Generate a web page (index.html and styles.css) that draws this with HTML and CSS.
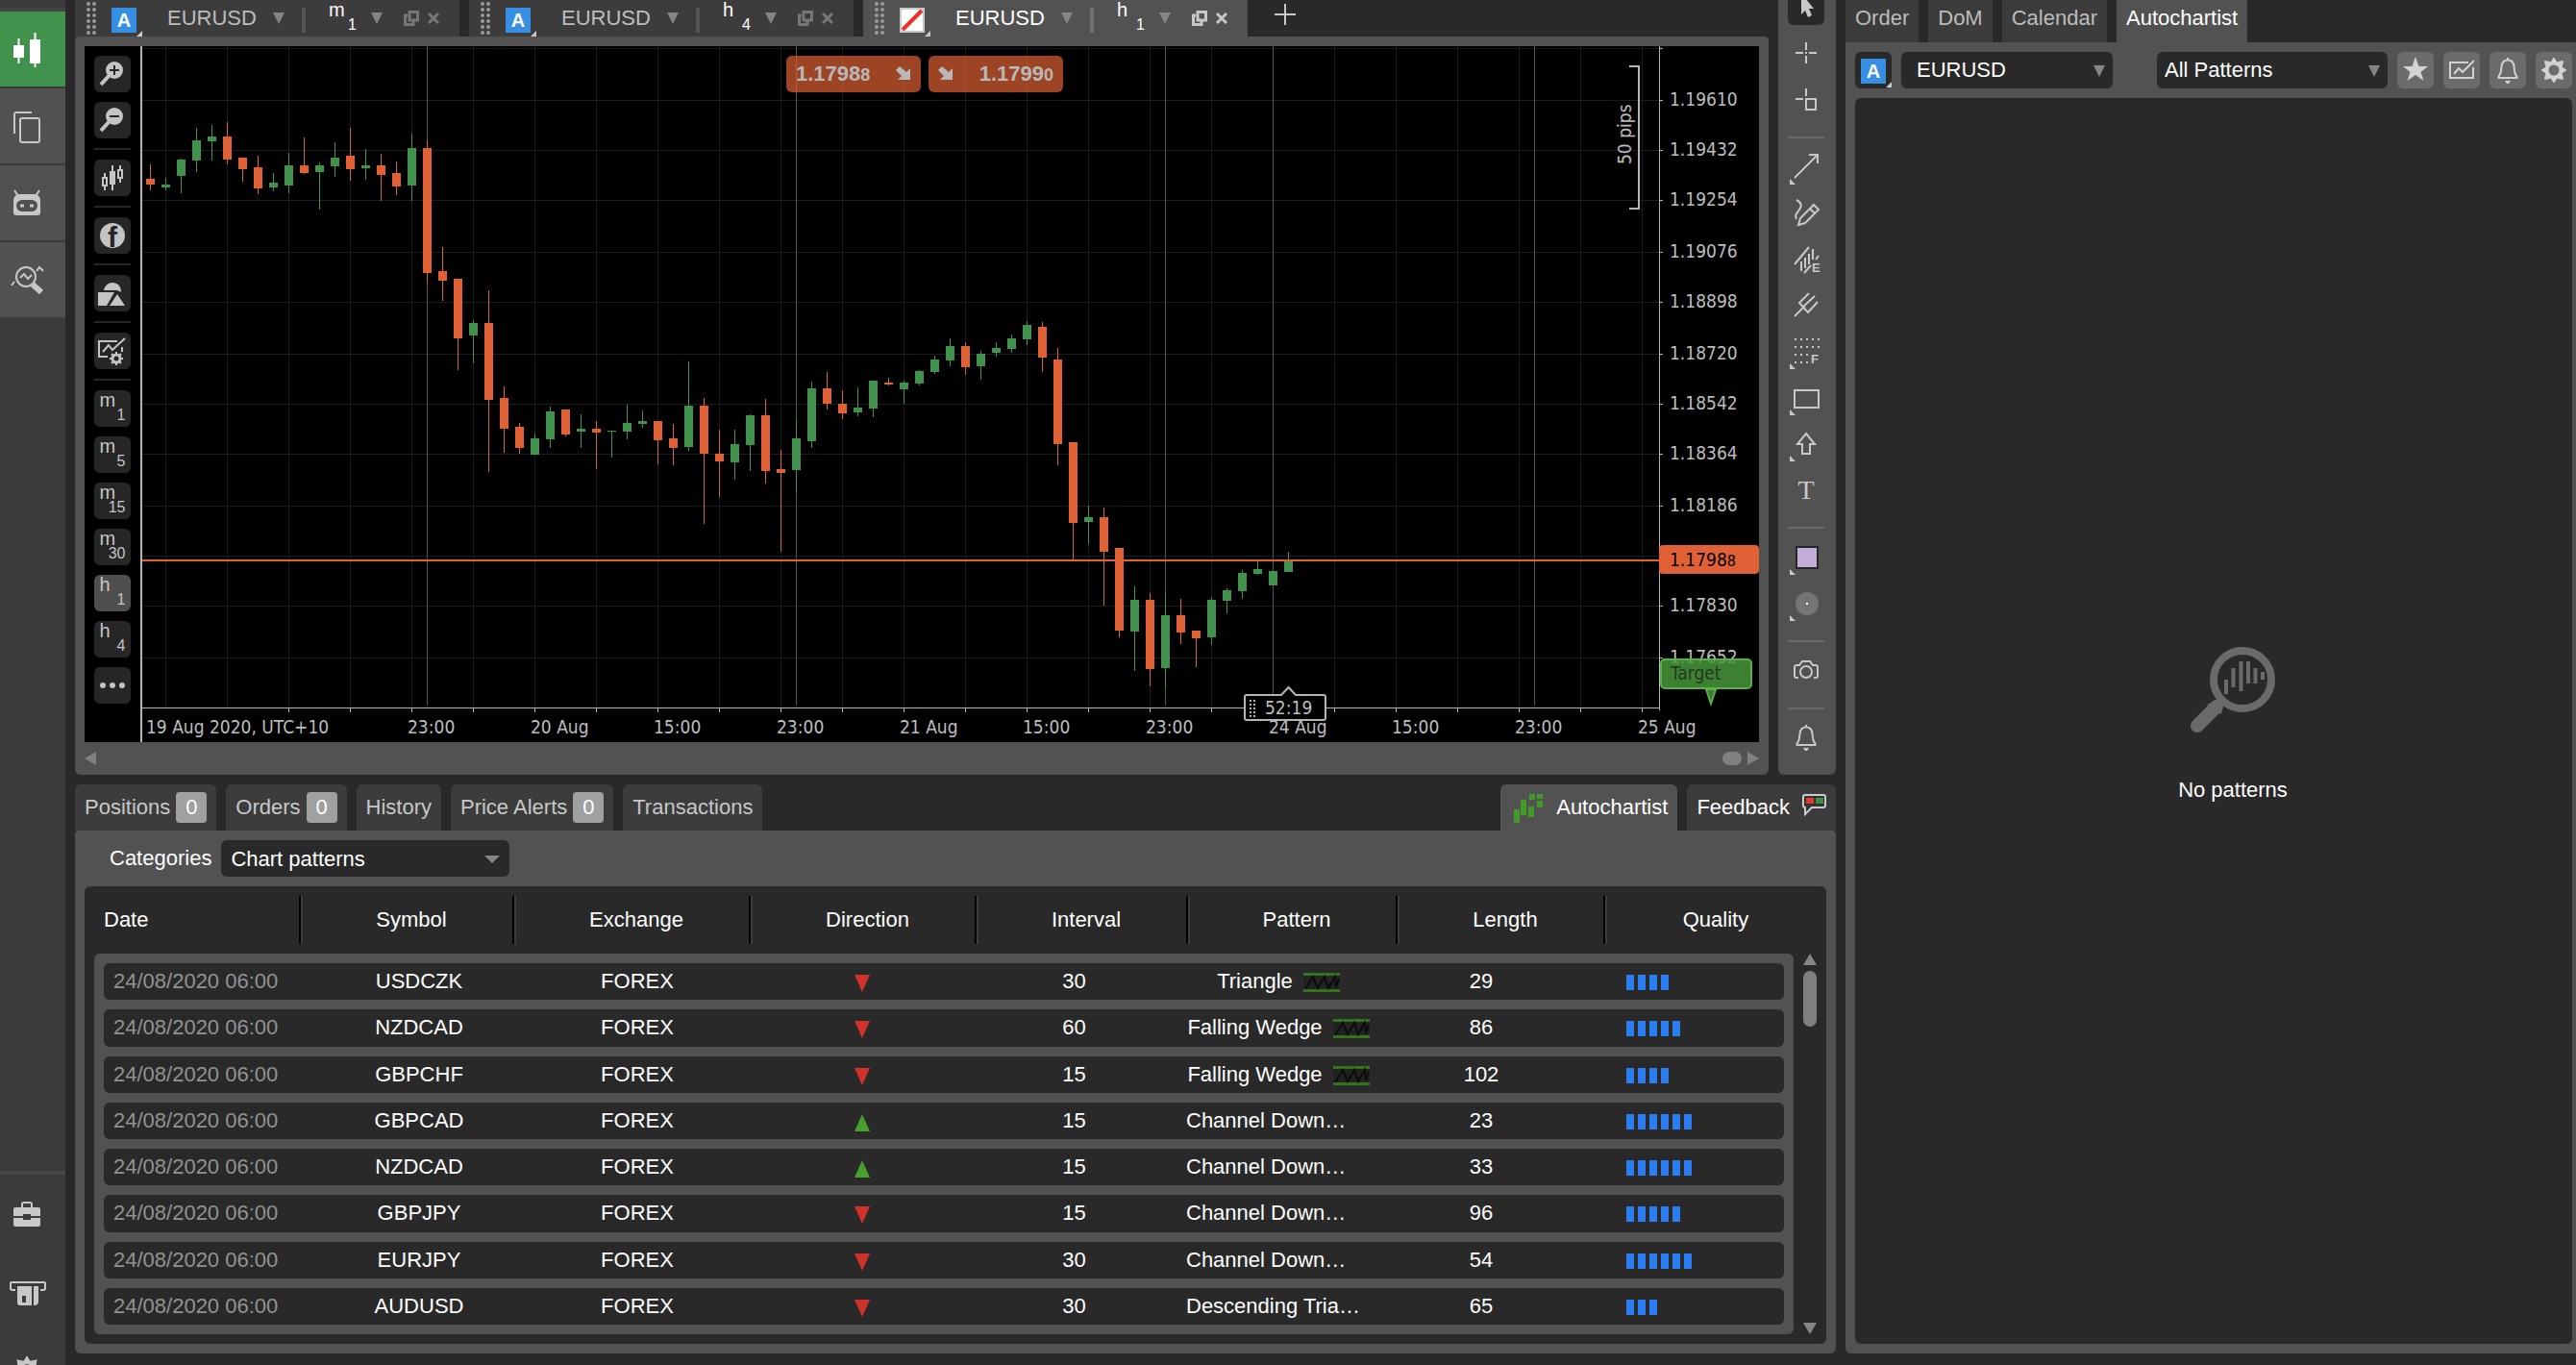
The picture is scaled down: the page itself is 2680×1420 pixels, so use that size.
FILE: index.html
```html
<!DOCTYPE html>
<html lang="en">
<head>
<meta charset="utf-8">
<title>EURUSD h1</title>
<link rel="stylesheet" href="styles.css">
<script src="chart.js" defer></script>
</head>
<body>
<svg class="defs" aria-hidden="true">
  <symbol id="i-dots" viewBox="0 0 10 38"><path d="M2 4v34M8 4v34" stroke="currentColor" stroke-width="4" stroke-linecap="round" stroke-dasharray="0 6"/></symbol>
  <symbol id="i-restore" viewBox="0 0 16 16"><path d="M6 1.500h8.500v8.500h-8.500zM4 5h-2.500v9.500h8.500v-3" fill="none" stroke="currentColor" stroke-width="3"/></symbol>
  <symbol id="i-close" viewBox="0 0 12 12"><path d="M1 1l10 10M11 1L1 11" stroke="currentColor" stroke-width="3"/></symbol>
  <symbol id="i-bell" viewBox="0 0 38 38"><path d="M8.500 27h21M9 26c4-4 3-9 3.500-11c.6-4.500 3-6.500 6.500-6.500s6 2 6.500 6.500c.5 2-.5 7 3.500 11M19 6v3" fill="none" stroke="currentColor" stroke-width="2"/><path d="M16 30h6l-2 3h-2z" fill="currentColor"/></symbol>
  <symbol id="i-gear" viewBox="0 0 38 38"><circle cx="19" cy="19" r="7.500" fill="none" stroke="currentColor" stroke-width="4"/><path d="M16 11l3-5 3 5zM16 27l3 5 3-5zM11 16l-5 3 5 3zM27 16l5 3-5 3zM10.500 14.500l-1-5 5 1zM27.500 14.500l1-5-5 1zM10.500 23.500l-1 5 5-1zM27.500 23.500l1 5-5-1z" fill="currentColor" stroke="currentColor"/></symbol>
  <symbol id="i-sell" viewBox="0 0 16 16"><path d="M4 0L0 4l6 6-4 4h13V2l-4 4z" fill="currentColor"/></symbol>
  <symbol id="i-pattern" viewBox="0 0 38 20"><path d="M0 3h38v14H0z" fill="#222"/><path d="M0 1.500h38M0 18.500h38" stroke="#33751f" stroke-width="3"/><path d="M2 17L10 4l5 12 7-12 4 12 7-12 1 11 3-9" fill="none" stroke="#0c0c0c" stroke-width="2"/></symbol>
  <symbol id="i-down" viewBox="0 0 16 18"><path d="M0 0h16L8 18z" fill="#d0312d"/></symbol>
  <symbol id="i-up" viewBox="0 0 16 18"><path d="M0 18h16L8 0z" fill="#48a02c"/></symbol>
</svg>

<nav class="rail" aria-label="Sections">
  <button class="rail-item active" aria-label="Trade"><svg viewBox="0 0 40 40"><path d="M6 16h11v13H6zM23 10h11v25H23z" fill="currentColor"/><path d="M11.500 9v26M28.500 3v36" stroke="currentColor" stroke-width="2"/></svg></button>
  <button class="rail-item" aria-label="Copy"><svg viewBox="0 0 40 40"><path d="M25 6H9q-2 0-2 2v20" class="line"/><rect x="13" y="12" width="20" height="25" rx="2" class="line"/></svg></button>
  <button class="rail-item" aria-label="Automate"><svg viewBox="0 0 40 40"><path d="M7 7l4 6M33 7l-4 6" class="line"/><path d="M12 11h16q6 0 6 8v11q0 3-3 3H9q-3 0-3-3V19q0-8 6-8z" fill="currentColor"/><rect x="9" y="17" width="22" height="12" rx="6" fill="#505050"/><path d="M13 23h4M23 23h4" stroke="currentColor" stroke-width="3"/></svg></button>
  <button class="rail-item" aria-label="Analyze"><svg viewBox="0 0 40 40"><circle cx="19" cy="17" r="10" class="line"/><path d="M13 18l4-4 4 5 4-4M30 11l3-4 4 4M4 26l3-4" class="line"/><path d="M26 25l9 8" stroke="currentColor" stroke-width="6"/></svg></button>
  <div class="rail-foot">
    <button class="rail-link" aria-label="Accounts"><svg viewBox="0 0 40 40"><path d="M15 14v-4q0-2 2-2h6q2 0 2 2v4" class="line"/><path d="M8 13h24q2 0 2 2v7H24v-2h-8v2H6v-7q0-2 2-2zM6 24h10v2h8v-2h10v7q0 2-2 2H8q-2 0-2-2z" fill="currentColor"/></svg></button>
    <button class="rail-link" aria-label="Deposit"><svg viewBox="0 0 40 40"><path d="M8 18H5q-2 0-2-2v-5q0-1 1-1h34q1 0 1 1v5q0 2-2 2h-3" class="line"/><path d="M10 14h15v20H13q-3 0-3-3zM27 14h5v16q0 4-5 4z" fill="currentColor"/><path d="M15 24h4v7h-4z" fill="#3c3c3c"/></svg></button>
    <button class="rail-link" aria-label="Settings"><svg viewBox="0 0 38 38"><use href="#i-gear"/></svg></button>
  </div>
</nav>

<main class="work">
  <div class="upper">
    <section class="charts">
      <div class="chart-tabs">
        <div class="chart-tab">
          <svg class="grip"><use href="#i-dots"/></svg>
          <button class="link-badge">A</button>
          <button class="drop">EURUSD<i class="caret"></i></button>
          <i class="bar"></i>
          <button class="drop"><span class="tf"><span>m</span><span>1</span></span><i class="caret"></i></button>
          <button class="tool" aria-label="Detach"><svg class="s16"><use href="#i-restore"/></svg></button>
          <button class="tool" aria-label="Close"><svg class="s12"><use href="#i-close"/></svg></button>
        </div>
        <div class="chart-tab">
          <svg class="grip"><use href="#i-dots"/></svg>
          <button class="link-badge">A</button>
          <button class="drop">EURUSD<i class="caret"></i></button>
          <i class="bar"></i>
          <button class="drop"><span class="tf"><span>h</span><span>4</span></span><i class="caret"></i></button>
          <button class="tool" aria-label="Detach"><svg class="s16"><use href="#i-restore"/></svg></button>
          <button class="tool" aria-label="Close"><svg class="s12"><use href="#i-close"/></svg></button>
        </div>
        <div class="chart-tab active">
          <svg class="grip"><use href="#i-dots"/></svg>
          <button class="link-badge none" aria-label="Not linked"><svg viewBox="0 0 26 26"><path d="M3 23L23 3" stroke="#ee2f24" stroke-width="4"/></svg></button>
          <button class="drop">EURUSD<i class="caret"></i></button>
          <i class="bar"></i>
          <button class="drop"><span class="tf"><span>h</span><span>1</span></span><i class="caret"></i></button>
          <button class="tool" aria-label="Detach"><svg class="s16"><use href="#i-restore"/></svg></button>
          <button class="tool" aria-label="Close"><svg class="s12"><use href="#i-close"/></svg></button>
        </div>
        <button class="add-tab" aria-label="New chart"><svg viewBox="0 0 22 22"><path d="M0 11h22M11 0v22" class="line"/></svg></button>
      </div>
      <div class="chart-frame">
        <div class="chart">
          <div class="chart-tools">
            <button aria-label="Zoom in"><svg viewBox="0 0 38 38"><path d="M7 30l9-10" stroke="currentColor" stroke-width="4"/><circle cx="21" cy="15" r="9" fill="currentColor"/><path d="M16 15h10M21 10v10" stroke="#262626" stroke-width="2"/></svg></button>
            <button aria-label="Zoom out"><svg viewBox="0 0 38 38"><path d="M7 30l9-10" stroke="currentColor" stroke-width="4"/><circle cx="21" cy="15" r="9" fill="currentColor"/><path d="M16 15h10" stroke="#262626" stroke-width="2"/></svg></button>
            <hr>
            <button aria-label="Chart type"><svg viewBox="0 0 38 38"><path d="M9 19h4v8H9zM11 14v5M11 27v5M25 11h4v8h-4zM27 6v5M27 19v5M19 6v26" class="line"/><path d="M16 12h6v14h-6z" fill="currentColor"/></svg></button>
            <hr>
            <button aria-label="Indicators"><svg viewBox="0 0 38 38"><circle cx="19" cy="19" r="13" fill="currentColor"/><text x="14" y="31" class="f-mark">f</text></svg></button>
            <hr>
            <button aria-label="Objects"><svg viewBox="0 0 38 38"><path d="M10 16a9 9 0 1 1 18 2l-4-2z" fill="currentColor"/><path d="M4 18h17l-8 14H4zM24 20l8 12H16z" fill="currentColor"/></svg></button>
            <hr>
            <button aria-label="Chart settings"><svg viewBox="0 0 38 38"><path d="M24 9H5v16h9M9 20l6-7 4 5L32 6M29 15v5" class="line"/><circle cx="23" cy="27" r="4" fill="none" stroke="currentColor" stroke-width="3"/><path d="M23 20v3M23 31v3M16 27h3M27 27h3M18 22l2 2M28 22l-2 2M18 32l2-2M28 32l-2-2" class="line"/></svg></button>
            <hr>
            <button><span class="tf"><span>m</span><span>1</span></span></button>
            <button><span class="tf"><span>m</span><span>5</span></span></button>
            <button><span class="tf"><span>m</span><span>15</span></span></button>
            <button><span class="tf"><span>m</span><span>30</span></span></button>
            <button class="active"><span class="tf"><span>h</span><span>1</span></span></button>
            <button><span class="tf"><span>h</span><span>4</span></span></button>
            <button aria-label="More"><svg viewBox="0 0 38 38" fill="currentColor"><circle cx="9" cy="19" r="3"/><circle cx="19" cy="19" r="3"/><circle cx="29" cy="19" r="3"/></svg></button>
          </div>
          <svg id="plot" class="plot" viewBox="146 48 1684 724" role="img" aria-label="EURUSD hourly candles"></svg>
          <div class="quick">
            <button><span>1.1798<small>8</small></span><svg class="s16"><use href="#i-sell"/></svg></button>
            <button><svg class="s16"><use href="#i-sell"/></svg><span>1.1799<small>0</small></span></button>
          </div>
        </div>
        <div class="hscroll"><i class="arrow-left"></i><i class="hthumb"></i><i class="arrow-right"></i></div>
      </div>
    </section>

    <aside class="drawbar" aria-label="Drawing tools">
      <button class="active" aria-label="Pointer"><svg viewBox="0 0 38 38"><path d="M14 5v22l4-4 3 7 4-2-3-7h5z" fill="currentColor"/></svg></button>
      <button aria-label="Crosshair"><svg viewBox="0 0 38 38"><path d="M8 19h8M22 19h8M19 8v8M19 22v8M18 19h2" class="line"/></svg></button>
      <button aria-label="Marker"><svg viewBox="0 0 38 38"><path d="M8 19h8M19 8v8M19 19h10v11H19z" class="line"/></svg></button>
      <hr>
      <button class="more" aria-label="Line"><svg viewBox="0 0 38 38"><path d="M7 31L31 7M22 7h9v9" class="line"/></svg></button>
      <button aria-label="Pencil"><svg viewBox="0 0 38 38"><path d="M9 6c8 4 4 9 1 13q-3 3-1 7M11 32l2-7L27 11l5 5-14 14zM23 15l5 5" class="line"/></svg></button>
      <button aria-label="Channel"><svg viewBox="0 0 38 38"><path d="M7 25L22 7M14 22v10M18 18v11M22 14v11M26 9v11M17 34l7-8M29 20l3-4" class="line"/><text x="25" y="33" class="mark">E</text></svg></button>
      <button aria-label="Pitchfork"><svg viewBox="0 0 38 38"><path d="M7 31l11-11M22 7L12 17l9 10 10-11M16 21L28 10" class="line"/></svg></button>
      <button class="more" aria-label="Fibonacci"><svg viewBox="0 0 38 38"><path d="M7 7h26M7 15h26M7 23h14M7 31h14" stroke="currentColor" stroke-width="2" stroke-dasharray="2 4"/><text x="24" y="32" class="mark">F</text></svg></button>
      <button class="more" aria-label="Rectangle"><svg viewBox="0 0 38 38"><path d="M7 12h25v18H7z" class="line"/></svg></button>
      <button class="more" aria-label="Arrow"><svg viewBox="0 0 38 38"><path d="M19 9l9 11h-5v10h-8v-10h-5z" class="line"/></svg></button>
      <button aria-label="Text"><svg viewBox="0 0 38 38"><text x="19" y="29" class="t-mark">T</text></svg></button>
      <hr>
      <button class="more" aria-label="Colour"><svg viewBox="0 0 38 38"><path d="M9 9h22v22H9z" fill="#c3aed9" stroke="#262626" stroke-width="2"/></svg></button>
      <button class="more" aria-label="Thickness"><svg viewBox="0 0 38 38"><circle cx="20" cy="20" r="12" fill="#757575"/><path d="M19 20h2" stroke="#fff" stroke-width="2"/></svg></button>
      <hr>
      <button aria-label="Snapshot"><svg viewBox="0 0 38 38"><circle cx="19" cy="21" r="6" class="line"/><path d="M11 27H9q-2 0-2-2V16q0-2 2-2h3l3-4h8l3 4h3q2 0 2 2v9q0 2-2 2h-2" class="line"/></svg></button>
      <hr>
      <button aria-label="Alerts"><svg viewBox="0 0 38 38"><use href="#i-bell"/></svg></button>
    </aside>
  </div>

  <section class="lower">
    <div class="tabs">
      <button class="tab">Positions<b class="count">0</b></button>
      <button class="tab">Orders<b class="count">0</b></button>
      <button class="tab">History</button>
      <button class="tab">Price Alerts<b class="count">0</b></button>
      <button class="tab">Transactions</button>
      <span class="fill"></span>
      <button class="tab active wide"><svg class="tab-icon" viewBox="0 0 34 32"><path d="M5 18v14M12 8v16M20 15v11M21 2v6M29 2v5M29 9v7" stroke="#419b2b" stroke-width="6"/></svg>Autochartist</button>
      <button class="tab lit">Feedback<svg class="flag" viewBox="0 0 28 24"><path d="M4 2h19q2 0 2 2v9q0 2-2 2H11l-7 7V15q-2 0-2-2V4q0-2 2-2z" fill="#333" stroke="#ccc" stroke-width="2"/><path d="M5 5h8v6H5z" fill="#e03a32"/><path d="M15 5h8v6h-8z" fill="#3f8f4c"/></svg></button>
    </div>
    <div class="panel">
      <div class="filter">
        <label for="category">Categories</label>
        <span class="pick small"><select id="category"><option>Chart patterns</option></select></span>
      </div>
      <div class="table-box">
        <table class="signals">
          <thead>
            <tr><th>Date</th><th>Symbol</th><th>Exchange</th><th>Direction</th><th>Interval</th><th>Pattern</th><th>Length</th><th>Quality</th></tr>
          </thead>
          <tbody>
            <tr><td>24/08/2020 06:00</td><td>USDCZK</td><td>FOREX</td><td><svg class="dir"><use href="#i-down"/></svg></td><td>30</td><td>Triangle<svg class="pat"><use href="#i-pattern"/></svg></td><td>29</td><td><i class="q"></i><i class="q"></i><i class="q"></i><i class="q"></i></td></tr>
            <tr><td>24/08/2020 06:00</td><td>NZDCAD</td><td>FOREX</td><td><svg class="dir"><use href="#i-down"/></svg></td><td>60</td><td>Falling Wedge<svg class="pat"><use href="#i-pattern"/></svg></td><td>86</td><td><i class="q"></i><i class="q"></i><i class="q"></i><i class="q"></i><i class="q"></i></td></tr>
            <tr><td>24/08/2020 06:00</td><td>GBPCHF</td><td>FOREX</td><td><svg class="dir"><use href="#i-down"/></svg></td><td>15</td><td>Falling Wedge<svg class="pat"><use href="#i-pattern"/></svg></td><td>102</td><td><i class="q"></i><i class="q"></i><i class="q"></i><i class="q"></i></td></tr>
            <tr><td>24/08/2020 06:00</td><td>GBPCAD</td><td>FOREX</td><td><svg class="dir"><use href="#i-up"/></svg></td><td>15</td><td class="cut">Channel Down…</td><td>23</td><td><i class="q"></i><i class="q"></i><i class="q"></i><i class="q"></i><i class="q"></i><i class="q"></i></td></tr>
            <tr><td>24/08/2020 06:00</td><td>NZDCAD</td><td>FOREX</td><td><svg class="dir"><use href="#i-up"/></svg></td><td>15</td><td class="cut">Channel Down…</td><td>33</td><td><i class="q"></i><i class="q"></i><i class="q"></i><i class="q"></i><i class="q"></i><i class="q"></i></td></tr>
            <tr><td>24/08/2020 06:00</td><td>GBPJPY</td><td>FOREX</td><td><svg class="dir"><use href="#i-down"/></svg></td><td>15</td><td class="cut">Channel Down…</td><td>96</td><td><i class="q"></i><i class="q"></i><i class="q"></i><i class="q"></i><i class="q"></i></td></tr>
            <tr><td>24/08/2020 06:00</td><td>EURJPY</td><td>FOREX</td><td><svg class="dir"><use href="#i-down"/></svg></td><td>30</td><td class="cut">Channel Down…</td><td>54</td><td><i class="q"></i><i class="q"></i><i class="q"></i><i class="q"></i><i class="q"></i><i class="q"></i></td></tr>
            <tr><td>24/08/2020 06:00</td><td>AUDUSD</td><td>FOREX</td><td><svg class="dir"><use href="#i-down"/></svg></td><td>30</td><td class="cut">Descending Tria…</td><td>65</td><td><i class="q"></i><i class="q"></i><i class="q"></i></td></tr>
          </tbody>
        </table>
        <div class="vscroll"><i class="arrow-up"></i><i class="vthumb"></i><i class="arrow-down"></i></div>
      </div>
    </div>
  </section>
</main>

<aside class="side">
  <div class="side-tabs">
    <button>Order</button><button>DoM</button><button>Calendar</button><button class="active">Autochartist</button>
  </div>
  <div class="side-panel">
    <div class="side-bar">
      <button class="link-box"><span class="link-badge">A</span></button>
      <span class="pick symbol"><select aria-label="Symbol"><option>EURUSD</option></select></span>
      <span class="fill"></span>
      <span class="pick patterns"><select aria-label="Patterns"><option>All Patterns</option></select></span>
      <button class="act" aria-label="Favourites"><svg viewBox="0 0 38 38"><path d="M19 5l3.500 10H32l-7.500 6 3 9L19 24l-8.500 6 3-9L6 15h9.500z" fill="currentColor"/></svg></button>
      <button class="act" aria-label="Chart"><svg viewBox="0 0 38 38"><path d="M26 11H7v16h24V16M11 23l5-6 4 4L32 9" class="line"/></svg></button>
      <button class="act" aria-label="Alerts"><svg viewBox="0 0 38 38"><use href="#i-bell"/></svg></button>
      <button class="act" aria-label="Settings"><svg viewBox="0 0 38 38"><use href="#i-gear"/></svg></button>
    </div>
    <div class="empty">
      <svg viewBox="0 0 90 90"><circle cx="55" cy="34" r="30" fill="none" stroke="currentColor" stroke-width="8"/><path d="M8 82L28 62" stroke="currentColor" stroke-width="14" stroke-linecap="round"/><path d="M18 60l7-3 10 0 0 3-2 10z" fill="currentColor"/><path d="M38 34v15M45.500 22v20M53.500 15v31M61 15v23M68.500 22v16M76 26v8" stroke="currentColor" stroke-width="4"/></svg>
      <p>No patterns</p>
    </div>
  </div>
</aside>
</body>
</html>
```
FILE: styles.css
```css
* { box-sizing: border-box; }

body {
  margin: 0;
  height: 100vh;
  overflow: hidden;
  display: flex;
  background: #292929;
  color: #fff;
  font: 22px/26px "Liberation Sans", Arial, sans-serif;
}

button, select {
  font: inherit;
  color: inherit;
  background: none;
  border: 0;
  padding: 0;
  margin: 0;
}

svg { display: block; flex: none; }
i { display: block; font-style: normal; flex: none; }
hr { margin: 0; border: 0; }

.defs { display: none; }
.fill { flex: 1; }
.line { fill: none; stroke: currentColor; stroke-width: 2; }
.s16 { width: 16px; height: 16px; }
.s12 { width: 12px; height: 12px; }

/* left rail */
.rail {
  flex: none;
  width: 68px;
  display: flex;
  flex-direction: column;
  gap: 2px;
  padding-top: 8px;
  background: #3b3b3b;
  color: #c8c8c8;
}
.rail svg { width: 40px; height: 40px; }
.rail-item {
  flex: none;
  height: 78px;
  padding: 0 0 0 8px;
  background: #515151;
}
.rail-item.active {
  background: #40924d;
  color: #fff;
  border-top: 4px solid #444;
  height: 82px;
}
.rail-foot {
  flex: none;
  margin-top: auto;
  height: 202px;
  overflow: hidden;
  border-top: 4px solid #484848;
}
.rail-link { display: block; width: 100%; height: 81px; padding-left: 8px; }

/* work area */
.work {
  flex: 1;
  min-width: 0;
  display: flex;
  flex-direction: column;
  gap: 10px;
  padding: 0 10px 12px;
}
.upper { display: flex; gap: 10px; }
.charts { flex: 1; min-width: 0; }

.chart-tabs { display: flex; gap: 10px; height: 38px; overflow: hidden; }
.chart-tab {
  display: grid;
  grid-template-columns: 26px 58px 140px 28px 78px 25px 13px;
  align-items: center;
  width: 400px;
  padding: 0 20px 8px 12px;
  background: #3c3c3c;
  color: #bdbdbd;
}
.chart-tab.active { background: #525252; color: #fff; }
.grip { width: 10px; height: 38px; color: #9a9a9a; }
.link-badge {
  position: relative;
  width: 26px;
  height: 26px;
  background: #368fe3;
  color: #fff;
  font-weight: bold;
  font-size: 20px;
  line-height: 26px;
  text-align: center;
}
.link-badge::after {
  content: "";
  position: absolute;
  left: 26px;
  top: 24px;
  border: 3px solid;
  border-color: transparent #c8c8c8 #c8c8c8 transparent;
}
.chart-tab .link-badge { margin-top: 4px; }
.link-badge.none { background: #fff; box-shadow: inset 0 0 0 2px #c8c8c8; }
.drop { display: flex; align-items: center; gap: 17px; text-align: left; }
.caret {
  border: 6px solid transparent;
  border-top: 12px solid #858585;
  border-bottom: 0;
}
.bar { width: 4px; height: 26px; margin-top: 4px; background: #555; }
.active .bar { background: #707070; }
.tool { color: #767676; }
.active .tool { color: #c8c8c8; }
.add-tab { width: 80px; padding: 0 0 8px 18px; color: #c8c8c8; }
.add-tab svg { width: 22px; height: 22px; }

.tf { display: block; width: 27px; height: 34px; line-height: 16px; font-size: 20px; text-align: left; }
.tf span { display: block; }
.tf span + span { font-size: 16px; text-align: right; }
.chart-tab .tf { width: 29px; color: #fff; }
.chart-tab .tf + .caret { margin-left: -2px; }

.chart-frame {
  padding: 10px 10px 0;
  background: #525252;
  border-radius: 4px 4px 6px 6px;
}
.chart { position: relative; display: flex; background: #000; }
.chart-tools {
  flex: none;
  width: 58px;
  display: flex;
  flex-direction: column;
  align-items: center;
  gap: 10px;
  padding-top: 10px;
  color: #c4c4c4;
}
.chart-tools button {
  width: 38px;
  height: 38px;
  border-radius: 6px;
  background: #262626;
  display: grid;
  place-items: center;
}
.chart-tools button.active { background: #4e4e4e; }
.chart-tools svg { width: 38px; height: 38px; }
.chart-tools hr { width: 38px; height: 2px; background: #262626; }
.f-mark { font: bold 30px "Liberation Sans", sans-serif; fill: #262626; }
.plot { flex: 1; min-width: 0; height: auto; }

.quick {
  position: absolute;
  top: 10px;
  left: 0;
  right: 0;
  display: flex;
  justify-content: center;
  gap: 8px;
  padding-left: 6px;
}
.quick button {
  display: flex;
  align-items: center;
  justify-content: space-between;
  width: 140px;
  height: 38px;
  padding: 0 10px;
  border-radius: 6px;
  background: rgba(224, 97, 53, 0.7);
  color: #b8b8b8;
  font-weight: bold;
}
.quick small { font-size: 18px; }

.hscroll { display: flex; align-items: center; height: 34px; }
.arrow-left { border: 7px solid transparent; border-right: 12px solid #808080; border-left: 0; margin-right: auto; }
.arrow-right { border: 7px solid transparent; border-left: 12px solid #808080; border-right: 0; }
.hthumb { width: 20px; height: 14px; border-radius: 7px; background: #808080; margin-right: 6px; }

/* plot */
.grid { stroke: #1b1b20; }
.day { stroke: #525252; }
.axis { stroke: #b5b5b5; fill: none; }
.up { stroke: #40924d; fill: #40924d; }
.down { stroke: #e06135; fill: #e06135; }
.scale { font: 19px "DejaVu Sans Condensed", "DejaVu Sans", sans-serif; fill: #bdbdbd; }
.scale.dark { fill: #000; }
.scale .pip { font-size: 16px; }
.scale.goal { fill: #22391f; }

/* drawing tools */
.drawbar {
  flex: none;
  width: 60px;
  display: flex;
  flex-direction: column;
  gap: 10px;
  padding-left: 10px;
  background: #525252;
  border-radius: 0 0 6px 6px;
  color: #c8c8c8;
  overflow: hidden;
}
.drawbar button { position: relative; flex: none; width: 38px; height: 38px; border-radius: 6px; }
.drawbar button.active { background: #292929; margin-top: -12px; }
.drawbar svg { width: 38px; height: 38px; }
.drawbar hr { width: 38px; height: 12px; border-bottom: 2px solid #6a6a6a; }
.drawbar .more::after {
  content: "";
  position: absolute;
  left: 2px;
  bottom: 0;
  border: 3px solid;
  border-color: transparent transparent #c8c8c8 #c8c8c8;
}
.mark { font: bold 13px "Liberation Sans", sans-serif; fill: currentColor; }
.t-mark { font: 28px "Liberation Serif", serif; fill: currentColor; text-anchor: middle; }

/* lower panel */
.lower { flex: 1; min-height: 0; display: flex; flex-direction: column; }
.tabs { display: flex; gap: 10px; flex: none; }
.tab {
  display: flex;
  align-items: center;
  gap: 6px;
  height: 48px;
  padding: 0 10px;
  border-radius: 6px 6px 0 0;
  background: #3c3c3c;
  color: #c8c8c8;
}
.tab.active { background: #525252; color: #fff; }
.tab.lit { color: #fff; padding-right: 8px; }
.tab.wide { padding: 0 10px 0 12px; }
.tab.lit, .tab.wide { gap: 12px; }
.count {
  width: 32px;
  height: 32px;
  line-height: 32px;
  border-radius: 4px;
  background: #a0a0a0;
  color: #fff;
  font-weight: normal;
}
.tab-icon { width: 34px; height: 32px; }
.flag { width: 28px; height: 24px; margin-bottom: 6px; }
.panel {
  flex: 1;
  min-height: 0;
  display: flex;
  flex-direction: column;
  gap: 10px;
  padding: 10px;
  background: #525252;
  border-radius: 4px 4px 6px 6px;
}
.filter { display: flex; align-items: center; gap: 10px; padding-left: 26px; }

.pick { position: relative; display: block; height: 38px; }
.pick select {
  width: 100%;
  height: 38px;
  padding: 0 10px;
  border-radius: 6px;
  background: #292929;
  appearance: none;
}
.pick::after {
  content: "";
  position: absolute;
  right: 8px;
  top: 14px;
  border: 6px solid transparent;
  border-top: 12px solid #858585;
  border-bottom: 0;
  pointer-events: none;
}
.pick.small { width: 300px; }
.pick.small select { padding-top: 2px; }
.pick.small::after { right: 10px; top: 16px; border-width: 8px 8px 0; }

.table-box {
  flex: 1;
  min-height: 0;
  position: relative;
  display: flex;
  padding: 10px;
  background: #292929;
  border-radius: 6px;
}
.signals { flex: 1; display: flex; flex-direction: column; gap: 10px; }
.signals thead { display: block; }
.signals thead tr {
  display: grid;
  grid-template-columns: 215fr 222fr 246fr 235fr 220fr 218fr 216fr 220fr;
}
.signals th {
  height: 50px;
  line-height: 50px;
  padding: 0 0 0 10px;
  font-weight: normal;
  border-right: 2px solid #000;
  box-shadow: 2px 0 #403c3a;
}
.signals th:first-child { text-align: left; }
.signals th:last-child { border: 0; box-shadow: none; }
.signals tbody {
  flex: 1;
  display: flex;
  flex-direction: column;
  gap: 10px;
  margin-right: 24px;
  padding: 10px;
  background: #525252;
  border-radius: 6px;
}
.signals tbody tr {
  flex: 1;
  display: grid;
  grid-template-columns: 218fr 220fr 234fr 233fr 209fr 216fr 206fr 212fr;
  background: #292929;
  border-radius: 6px;
}
.signals td {
  display: flex;
  align-items: center;
  justify-content: center;
  padding: 0;
}
.signals td:first-child { justify-content: flex-start; padding-left: 10px; color: #929292; }
.signals td:last-child { justify-content: flex-start; gap: 4px; padding: 2px 0 0 48px; }
.signals td.cut { justify-content: flex-start; padding-left: 12px; }
.dir { width: 16px; height: 18px; margin-top: 4px; }
.pat { width: 38px; height: 20px; margin: 2px 0 0 11px; }
.q { width: 8px; height: 16px; background: #2b7ef2; }

.vscroll {
  position: absolute;
  top: 70px;
  right: 10px;
  bottom: 10px;
  display: flex;
  flex-direction: column;
  align-items: center;
}
.arrow-up { border: 7px solid transparent; border-bottom: 12px solid #858585; border-top: 0; }
.arrow-down { border: 7px solid transparent; border-top: 12px solid #858585; border-bottom: 0; margin-top: auto; }
.vthumb { width: 14px; height: 58px; margin-top: 6px; border-radius: 7px; background: #808080; }

/* right panel */
.side { flex: none; width: 760px; display: flex; flex-direction: column; padding-bottom: 12px; }
.side-tabs { display: flex; gap: 10px; }
.side-tabs button { height: 44px; padding: 0 10px 6px; background: #3c3c3c; color: #bdbdbd; }
.side-tabs .active { background: #525252; color: #fff; }
.side-panel {
  flex: 1;
  display: flex;
  flex-direction: column;
  gap: 10px;
  padding: 10px 4px 10px 10px;
  background: #525252;
  border-radius: 0 0 0 6px;
}
.side-bar { display: flex; gap: 10px; }
.link-box { width: 38px; height: 38px; padding: 1px 0 0 6px; border-radius: 6px; background: #292929; text-align: left; }
.link-box .link-badge { display: block; }
.pick.symbol { width: 220px; }
.pick.symbol select { padding-left: 16px; }
.pick.patterns { width: 240px; }
.pick.patterns select { padding-left: 8px; }
.act { width: 38px; height: 38px; border-radius: 6px; background: #6b6b6b; color: #d2d2d2; }
.act svg { width: 38px; height: 38px; }
.empty {
  flex: 1;
  display: flex;
  flex-direction: column;
  align-items: center;
  justify-content: center;
  gap: 46px;
  padding: 8px 0 0 40px;
  border-radius: 6px;
  background: #292929;
}
.empty svg { width: 90px; height: 90px; color: #6a6a6a; }
.empty p { margin: 0; }
```
FILE: chart.js
```js
// Each candle: direction, high, body top, body bottom, low (plot units).
const candles = [
  ["d",171,186,192,198],["u",185,192,195,198],["u",165,166,183,201],["u",133,146,167,179],
  ["u",130,142,147,167],["d",127,142,166,171],["d",164,164,176,189],["d",162,174,196,202],
  ["u",180,190,195,199],["u",159,172,193,201],["d",143,172,180,181],["u",169,172,179,218],
  ["u",148,164,173,184],["d",133,162,176,188],["u",155,172,175,187],["d",160,172,182,209],
  ["d",168,180,194,203],["u",139,154,193,209],["d",146,154,284,295],["d",257,282,292,313],
  ["d",290,290,352,385],["u",333,336,349,378],["d",302,336,416,491],["d",402,414,446,471],
  ["d",440,444,466,472],["u",451,456,473,473],["u",423,428,457,466],["d",426,426,452,454],
  ["u",431,446,449,466],["d",438,446,450,488],["u",448,448,449,476],["u",421,440,449,457],
  ["u",427,438,441,445],["d",438,438,458,483],["d",441,456,466,484],["u",376,422,465,469],
  ["d",414,422,472,545],["d",447,472,480,517],["u",447,462,481,499],["u",431,432,463,490],
  ["d",415,432,490,503],["d",468,488,492,574],["u",436,456,489,512],["u",397,404,459,466],
  ["d",387,404,420,426],["d",406,420,430,436],["u",403,424,429,433],["u",396,396,425,434],
  ["d",393,398,400,401],["u",396,398,405,420],["u",385,386,399,401],["u",370,374,387,389],
  ["u",352,360,375,381],["d",356,360,382,390],["u",365,368,381,395],["u",356,362,367,371],
  ["u",348,352,363,367],["u",334,338,353,359],["d",335,340,372,387],["d",362,374,462,484],
  ["d",460,460,544,583],["u",526,538,543,566],["d",528,538,574,630],["d",570,570,656,663],
  ["u",610,624,657,698],["d",617,624,696,714],["u",617,640,695,716],["d",623,640,658,670],
  ["d",656,656,664,694],["u",621,624,663,671],["u",612,614,625,638],["u",593,596,615,623],
  ["u",584,592,597,598],["u",594,594,609,609],["u",574,583,595,595]
];
const levels = [
  [50, ""],[104, "1.19610"],[156, "1.19432"],[208, "1.19254"],[262, "1.19076"],
  [314, "1.18898"],[368, "1.18720"],[420, "1.18542"],[472, "1.18364"],[526, "1.18186"],
  [578, ""],[630, "1.17830"],[684, "1.17652"]
];
const times = ["23:00","20 Aug","15:00","23:00","21 Aug","15:00","23:00","24 Aug","15:00","23:00","25 Aug"];
const right = 1726, bottom = 736;
const line = (c, x1, y1, x2, y2) => `<path class="${c}" d="M${x1} ${y1}L${x2} ${y2}"/>`;
const text = (c, x, y, s) => `<text class="scale ${c}" x="${x}" y="${y}">${s}</text>`;

let out = "";
for (let k = 0; k < 25; k++) {
  const x = 172.5 + 64 * k;
  out += line("grid", x, 48, x, bottom);
  if (k > 1) out += line("axis", x, bottom, x, bottom + 5);
}
for (const [y, label] of levels) {
  out += line("grid", 148, y + 0.5, right, y + 0.5);
  out += line("axis", right, y + 0.5, right + 4, y + 0.5);
  if (label) out += text("", 1737, y + 6, label);
}
for (const x of [444.5, 828.5, 1212.5, 1324.5, 1596.5]) out += line("day", x, 48, x, bottom - 2);
candles.forEach(([dir, high, top, low, min], i) => {
  const x = 156.5 + 16 * i, c = dir === "u" ? "up" : "down";
  out += line(c, x, high, x, min);
  out += `<rect class="${c}" x="${x - 4}" y="${top + 0.5}" width="8" height="${Math.max(low - top - 1, 0.1)}"/>`;
});
out += `<path class="axis" d="M147 48V772" stroke-width="2"/>`;
out += line("axis", 148, bottom + 0.5, right, bottom + 0.5) + line("axis", right + 0.5, 48, right + 0.5, bottom + 3);
out += `<path class="down" d="M148 583H1726" stroke-width="2"/>`;
out += `<rect class="down" x="1726.5" y="567.5" width="103" height="29" rx="3"/>`;
out += `<text class="scale dark" x="1737" y="589">1.1798<tspan class="pip">8</tspan></text>`;
out += `<rect x="1728" y="686" width="94" height="30" rx="4" fill="#48963b" fill-opacity=".85" stroke="#55b245" stroke-width="2"/>`;
out += `<path d="M1775 717h10l-5 15z" fill="#3c7d31" stroke="#55b245" stroke-width="2"/>` + text("goal", 1738, 707, "Target");
out += text("", 152, 763, "19 Aug 2020, UTC+10");
times.forEach((t, i) => { out += text("", 424 + 128 * i, 763, t); });
out += `<path class="axis" d="M1695 69H1705V217H1695" stroke-width="2"/>`;
out += `<text class="scale" transform="translate(1697 171) rotate(-90)">50 pips</text>`;
out += `<path d="M1297 723H1333L1340.500 715L1348 723H1377Q1379 723 1379 725V747Q1379 749 1377 749H1297Q1295 749 1295 747V725Q1295 723 1297 723Z" fill="#000" stroke="#b5b5b5" stroke-width="2"/>`;
out += `<path class="axis" d="M1301 728V747M1305 728V747" stroke-width="2" stroke-dasharray="2 2"/>`;
out += text("", 1316, 743, "52:19");
document.getElementById("plot").innerHTML = out;
```
